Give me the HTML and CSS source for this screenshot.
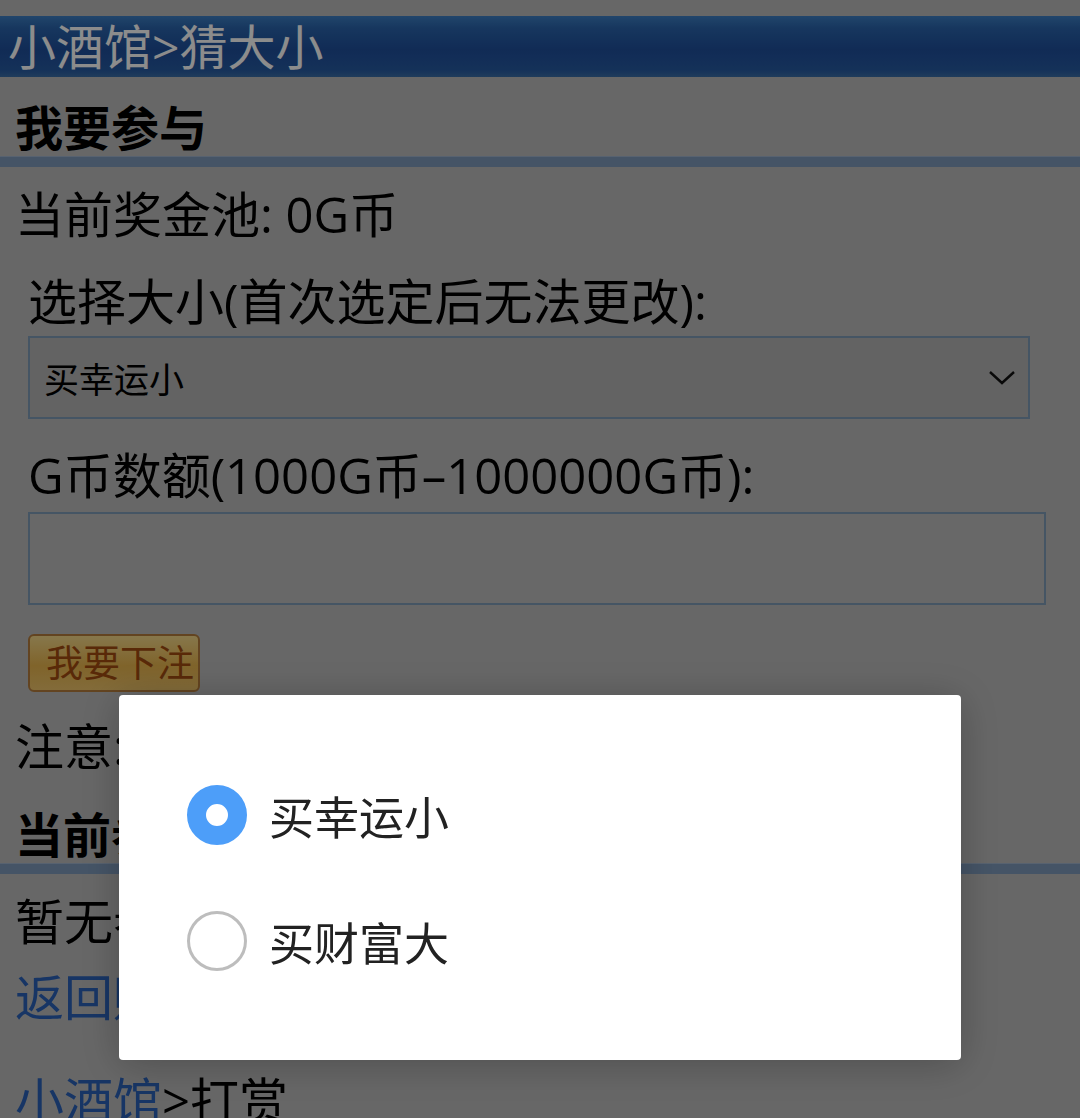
FILE: index.html
```html
<!DOCTYPE html>
<html lang="zh-CN">
<head>
    <meta charset="UTF-8">
    <meta name="viewport" content="width=device-width, initial-scale=1.0">
    <title>小酒馆 - 猜大小</title>
    <link rel="stylesheet" href="styles.css">
</head>
<body>
    <div class="top-strip"></div>

    <div class="title-bar">小酒馆&gt;猜大小</div>

    <div class="sub-title">我要参与</div>
    <div class="line"></div>

    <div class="content">
        <p class="row">当前奖金池: 0G币</p>

        <form class="bet-form">
            <label class="row pick-label">选择大小(首次选定后无法更改):</label>
            <div class="select-box">
                <span>买幸运小</span>
                <svg class="chevron" width="28" height="16" viewBox="0 0 28 16">
                    <polyline points="2,2 14,13 26,2" fill="none" stroke="#111" stroke-width="2.4"/>
                </svg>
            </div>

            <label class="row amount-label">G币数额(1000G币–1000000G币):</label>
            <div class="input-box"></div>

            <button type="button" class="bet-btn">我要下注</button>
        </form>

        <p class="row note">注意:开奖后结算</p>
    </div>

    <div class="sub-title">当前参与</div>
    <div class="line"></div>

    <div class="content">
        <p class="row">暂无参与</p>
        <p class="row"><a href="#">返回赌场</a></p>
        <p class="row nav"><a href="#">小酒馆</a>&gt;打赏</p>
    </div>

    <!-- dialog opened by the select -->
    <div class="overlay">
        <div class="dialog">
            <div class="option">
                <span class="radio checked"></span>
                <span>买幸运小</span>
            </div>
            <div class="option">
                <span class="radio"></span>
                <span>买财富大</span>
            </div>
        </div>
    </div>
</body>
</html>
```

FILE: styles.css
```css
body {
    margin: 0;
    padding: 0;
    background-color: #bcbcbc;
    font-family: "Open Sans", "Noto Sans CJK SC", sans-serif;
    font-size: 49px;
    color: #000;
    height: 1118px;
    overflow: hidden;
}

.top-strip {
    height: 16px;
}

.title-bar {
    height: 61px;
    line-height: 61px;
    padding-left: 8px;
    font-size: 48px;
    color: #fff;
    background: linear-gradient(#3d7fc4 0%, #2a64ac 20%, #1f4f9c 55%, #265aa2 88%, #3a6ea8 100%);
}

.sub-title {
    height: 79px;
    line-height: 102px;
    padding-left: 15px;
    font-size: 48px;
    font-weight: bold;
}

.line {
    height: 10px;
    background-color: #7f9abb;
    border-top: 1px solid #9fb3cc;
}

.content {
    padding: 0 15px 3px;
}

.row {
    display: block;
    margin: 0;
    height: 70px;
    line-height: 70px;
}

.content > .row:first-child {
    margin-top: 12px;
}

.bet-form {
    padding-left: 13px;
}

.pick-label {
    margin-top: 17px;
}

.select-box {
    width: 1002px;
    height: 83px;
    box-sizing: border-box;
    border: 2px solid #7f9bb6;
    background-color: #b4b4b4;
    display: flex;
    align-items: center;
    justify-content: space-between;
    padding: 0 12px 0 14px;
    font-size: 35px;
}

.amount-label {
    margin-top: 21px;
}

.input-box {
    width: 1018px;
    height: 93px;
    box-sizing: border-box;
    border: 2px solid #7f9bb6;
    background-color: #bdbdbd;
    margin-top: 2px;
}

.bet-btn {
    display: block;
    margin-top: 29px;
    width: 172px;
    height: 58px;
    padding: 0 0 0 16px;
    text-align: left;
    border: 2px solid #b57d3c;
    border-radius: 6px;
    background: linear-gradient(#f5d98a, #e9b64e 55%, #eec46a);
    color: #a24c10;
    font-family: inherit;
    font-size: 37px;
    line-height: 52px;
}

.note {
    margin-top: 19px;
}

.content a {
    color: #2b62b8;
    text-decoration: none;
}

.content .row + .row {
    margin-top: 6px;
}

.content .row.nav {
    margin-top: 33px;
}

.overlay {
    position: fixed;
    top: 0;
    left: 0;
    right: 0;
    bottom: 0;
    background-color: rgba(0, 0, 0, 0.45);
    display: flex;
    justify-content: center;
    align-items: flex-start;
    padding-top: 695px;
}

.dialog {
    width: 842px;
    box-sizing: border-box;
    padding: 57px 68px 56px;
    background-color: #fff;
    border-radius: 4px;
    box-shadow: 0 4px 40px rgba(0, 0, 0, 0.25);
}

.option {
    height: 126px;
    display: flex;
    align-items: center;
    gap: 22px;
    font-size: 45px;
    color: #222;
}

.radio {
    width: 60px;
    height: 60px;
    box-sizing: border-box;
    border-radius: 50%;
    border: 3px solid #bdbdbd;
    background-color: #fff;
}

.radio.checked {
    border: 19px solid #4d9ef9;
}
```
